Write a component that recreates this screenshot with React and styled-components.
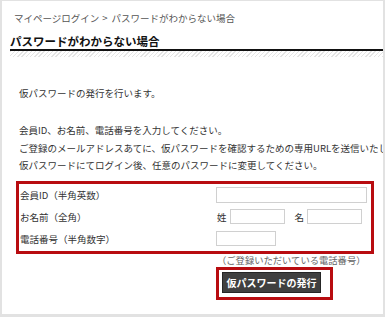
import React from 'react';
import styled, { createGlobalStyle } from 'styled-components';

const GlobalStyle = createGlobalStyle`
  body {
    margin: 0;
    background: #ffffff;
    font-family: 'Noto Sans CJK JP', 'Noto Sans', sans-serif;
  }
`;

function App() {
  return (
    <>
      <GlobalStyle />
      <Frame>
        <Breadcrumb>
          マイページログイン<Separator>&gt;</Separator>パスワードがわからない場合
        </Breadcrumb>
        <Heading>パスワードがわからない場合</Heading>
        <Hatch />
        <Paragraph $gap={28}>
          <Line>仮パスワードの発行を行います。</Line>
        </Paragraph>
        <Paragraph $gap={19.5}>
          <Line>会員ID、お名前、電話番号を入力してください。</Line>
          <Line>ご登録のメールアドレスあてに、仮パスワードを確認するための専用URLを送信いたします。</Line>
          <Line>仮パスワードにてログイン後、任意のパスワードに変更してください。</Line>
        </Paragraph>
        <FormBox>
          <FormRow>
            <Label>会員ID（半角英数）</Label>
            <Fields>
              <TextInput $width={151} $height={16} />
            </Fields>
          </FormRow>
          <FormRow>
            <Label>お名前（全角）</Label>
            <Fields>
              <FieldName>姓</FieldName>
              <TextInput $width={55} $height={15} />
              <FieldName $space={10}>名</FieldName>
              <TextInput $width={55} $height={15} />
            </Fields>
          </FormRow>
          <FormRow>
            <Label>電話番号（半角数字）</Label>
            <Fields>
              <TextInput $width={60} $height={15} />
            </Fields>
          </FormRow>
        </FormBox>
        <Note>（ご登録いただいている電話番号）</Note>
        <ButtonOutline>
          <IssueButton>仮パスワードの発行</IssueButton>
        </ButtonOutline>
      </Frame>
    </>
  );
}

const Frame = styled.div`
  width: 385px;
  height: 317px;
  box-sizing: border-box;
  border-style: solid;
  border-color: #e2e2e2;
  border-width: 1px 2px 3px 2px;
  padding-left: 8px;
  overflow: hidden;
  background: #ffffff;
`;

const Breadcrumb = styled.div`
  padding: 10px 0 0 4px;
  font-size: 9.5px;
  line-height: 14px;
  color: #555555;
  white-space: nowrap;
`;

const Separator = styled.span`
  margin: 0 4px 0 3px;
`;

const Heading = styled.h1`
  margin: 8px 0 0;
  font-size: 11.5px;
  font-weight: bold;
  line-height: 16px;
  color: #111111;
  border-bottom: 2px solid #111111;
  white-space: nowrap;
`;

const Hatch = styled.div`
  height: 6px;
  background: repeating-linear-gradient(
    -45deg,
    #e4e4e4 0,
    #e4e4e4 1px,
    #ffffff 1px,
    #ffffff 3px
  );
`;

const Paragraph = styled.div`
  margin-top: ${(p) => p.$gap}px;
  padding-left: 9px;
  font-size: 9.5px;
  line-height: 17.5px;
  color: #333333;
`;

const Line = styled.div`
  white-space: nowrap;
`;

const FormBox = styled.div`
  margin: 6px 0 0 6px;
  width: 358px;
  box-sizing: border-box;
  border: 3px solid #b80c10;
  padding: 0 0 1px 1px;
`;

const FormRow = styled.div`
  display: grid;
  grid-template-columns: 196px 1fr;
  align-items: center;
  height: 22px;
`;

const Label = styled.div`
  font-size: 9.5px;
  color: #333333;
  white-space: nowrap;
`;

const Fields = styled.div`
  display: flex;
  align-items: center;
`;

const FieldName = styled.span`
  font-size: 9.5px;
  color: #333333;
  margin: 0 3px 0 ${(p) => p.$space || 1}px;
`;

const TextInput = styled.input`
  width: ${(p) => p.$width}px;
  height: ${(p) => p.$height}px;
  box-sizing: border-box;
  margin: 0;
  padding: 0;
  border: 1px solid #d0d0d0;
  background: #ffffff;
`;

const Note = styled.div`
  padding-left: 207px;
  font-size: 9.3px;
  line-height: 12px;
  color: #666666;
  white-space: nowrap;
`;

const ButtonOutline = styled.div`
  display: inline-flex;
  margin: 1px 0 0 206px;
  border: 3px solid #b80c10;
  padding: 2px 9px 4px 3px;
`;

const IssueButton = styled.button`
  width: 99px;
  height: 21px;
  margin: 0;
  padding: 0;
  background: #404040;
  border: 1px solid #262626;
  color: #ffffff;
  font-family: 'Noto Sans CJK JP', sans-serif;
  font-size: 10px;
  font-weight: bold;
  white-space: nowrap;
`;

export default App;
